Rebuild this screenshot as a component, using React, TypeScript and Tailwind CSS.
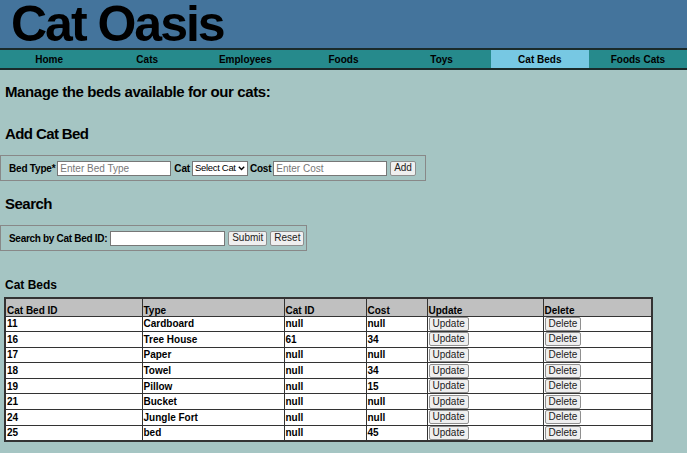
import React from "react";

const rows = [
  ["11", "Cardboard", "null", "null"],
  ["16", "Tree House", "61", "34"],
  ["17", "Paper", "null", "null"],
  ["18", "Towel", "null", "34"],
  ["19", "Pillow", "null", "15"],
  ["21", "Bucket", "null", "null"],
  ["24", "Jungle Fort", "null", "null"],
  ["25", "bed", "null", "45"],
];

const nav = ["Home", "Cats", "Employees", "Foods", "Toys", "Cat Beds", "Foods Cats"];

function Btn({ children, small }: { children: React.ReactNode; small?: boolean }) {
  return (
    <button
      className={
        (small ? "h-[14px] px-[3px] " : "h-[15px] px-[3px] ") +
        "shrink-0 text-[10px] leading-none font-normal text-[#222] bg-[#efefef] border border-[#8f8f8f] rounded-[2px]"
      }
    >
      {children}
    </button>
  );
}

export default function App() {
  return (
    <div className="w-[687px] h-[453px] overflow-hidden bg-[#a5c5c3] text-black" style={{ fontFamily: '"Liberation Sans", Arial, sans-serif' }}>
      <div className="h-[48px] bg-[#44749c] flex items-center pl-[11px]">
        <h1 className="text-[50px] font-bold leading-[48px] tracking-[-2px]">Cat Oasis</h1>
      </div>
      <div className="h-[22px] bg-[#268a8c] border-t-2 border-b-2 border-[#1a2a2a] flex">
        {nav.map((n) => (
          <div
            key={n}
            className={
              "flex-1 flex items-center justify-center text-[10px] font-bold " +
              (n === "Cat Beds" ? "bg-[#77c8e3]" : "")
            }
          >
            {n}
          </div>
        ))}
      </div>
      <div className="pl-[5px]">
        <h2 className="text-[15px] tracking-[-0.4px] font-bold mt-[13px] leading-[18px]">Manage the beds available for our cats:</h2>
        <h2 className="text-[15px] tracking-[-0.6px] font-bold mt-[24px] leading-[18px]">Add Cat Bed</h2>
      </div>
      <div className="mt-[12px] w-[426px] h-[26px] border border-[#888] flex items-center pl-[8px] gap-[2px] text-[10px] font-bold whitespace-nowrap tracking-[-0.2px]">
        <span className="shrink-0">Bed Type*</span>
        <input className="shrink-0 w-[114px] h-[15px] bg-white border border-[#777] px-[2px] text-[10px] font-normal tracking-normal placeholder:text-[#777]" placeholder="Enter Bed Type" />
        <span className="shrink-0 ml-[1px]">Cat</span>
        <div className="shrink-0 relative w-[56px] h-[15px] bg-white border border-[#777] text-[9.5px] tracking-[-0.3px] font-normal flex items-center pl-[2px]">
          <span>Select Cat</span>
          <svg className="absolute right-[2px] top-[4px]" width="7" height="5" viewBox="0 0 7 5">
            <path d="M0.8 0.8 L3.5 3.6 L6.2 0.8" fill="none" stroke="#000" strokeWidth="1.4" />
          </svg>
        </div>
        <span className="shrink-0">Cost</span>
        <input className="shrink-0 w-[114px] h-[15px] bg-white border border-[#777] px-[2px] text-[10px] font-normal tracking-normal placeholder:text-[#777]" placeholder="Enter Cost" />
        <span className="ml-[1px] flex"><Btn>Add</Btn></span>
      </div>
      <div className="pl-[5px]">
        <h2 className="text-[15px] tracking-[-0.5px] font-bold mt-[14px] leading-[18px]">Search</h2>
      </div>
      <div className="mt-[12px] w-[307px] h-[26px] border border-[#888] flex items-center pl-[8px] gap-[3px] text-[10px] font-bold whitespace-nowrap">
        <span className="shrink-0 tracking-[-0.3px]">Search by Cat Bed ID:</span>
        <input className="shrink-0 w-[115px] h-[15px] bg-white border border-[#777]" />
        <Btn>Submit</Btn>
        <Btn>Reset</Btn>
      </div>
      <div className="pl-[5px]">
        <h3 className="text-[12px] font-bold mt-[27px] leading-[14px]">Cat Beds</h3>
      </div>
      <table className="ml-[4px] mt-[5px] border-collapse border-2 border-[#333] text-[10px] font-bold">
        <thead>
          <tr className="bg-[#c0c0c0] h-[18px]">
            {[
              ["Cat Bed ID", "w-[137px]"],
              ["Type", "w-[142px]"],
              ["Cat ID", "w-[82px]"],
              ["Cost", "w-[61px]"],
              ["Update", "w-[116px]"],
              ["Delete", "w-[109px]"],
            ].map(([h, w]) => (
              <th key={h} className={w + " border border-[#333] text-left align-bottom px-[1px] p-0 leading-[11px] font-bold"}>
                {h}
              </th>
            ))}
          </tr>
        </thead>
        <tbody>
          {rows.map((r) => (
            <tr key={r[0]} className="bg-white h-[15.6px]">
              {r.map((c, i) => (
                <td key={i} className="border border-[#333] px-[1px] py-0 leading-[11px]">
                  {c}
                </td>
              ))}
              <td className="border border-[#333] px-[1px] py-0 leading-none">
                <div className="flex"><Btn small>Update</Btn></div>
              </td>
              <td className="border border-[#333] px-[1px] py-0 leading-none">
                <div className="flex"><Btn small>Delete</Btn></div>
              </td>
            </tr>
          ))}
        </tbody>
      </table>
    </div>
  );
}
